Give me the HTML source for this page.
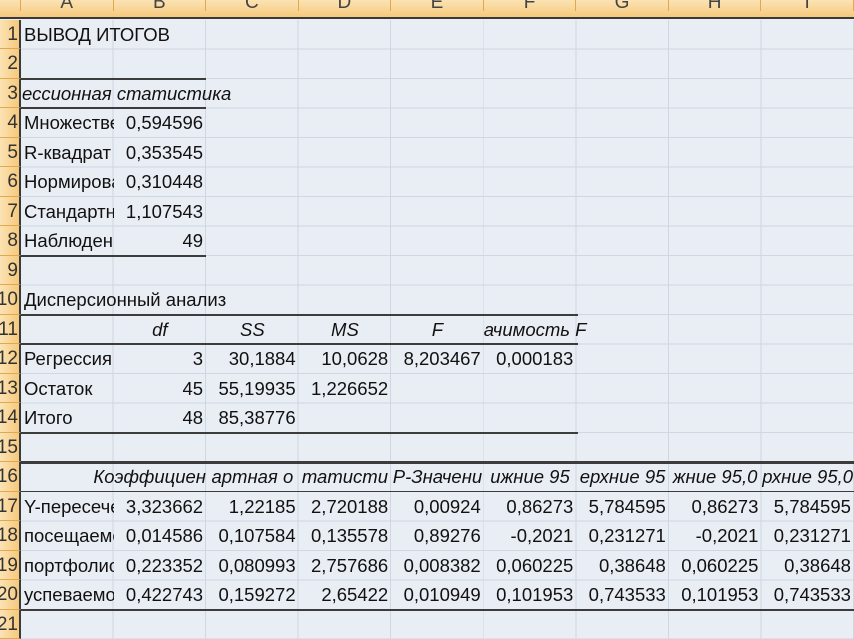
<!DOCTYPE html>
<html><head><meta charset="utf-8"><style>
body{margin:0;width:854px;height:639px;overflow:hidden;background:#e9edf4;font-family:"Liberation Sans",Arial,sans-serif;position:relative}
.grid{position:absolute;left:21px;top:19.5px;right:0;bottom:0;
background-image:repeating-linear-gradient(to right,transparent 0,transparent 91.55px,#d0d7e3 91.55px,#d0d7e3 92.55px),repeating-linear-gradient(to bottom,transparent 0,transparent 28.5px,#d0d7e3 28.5px,#d0d7e3 29.5px);}
.hdr{position:absolute;left:0;top:0;width:854px;height:19px;background:linear-gradient(#fbe3b4,#f6c97c);border-bottom:2px solid #3a3a3a;box-sizing:border-box}
.hl{position:absolute;top:-8px;width:92.55px;text-align:center;font-size:19px;color:#444;border-right:1px solid #e0a850;height:19px;box-sizing:border-box}
.rn{position:absolute;left:0;width:21px;height:29.5px;background:linear-gradient(to right,#fbe3b4,#f6c97c);border-bottom:1px solid #e0a850;border-right:2px solid #3a3a3a;box-sizing:border-box;text-align:right;font-size:19px;line-height:29.5px;color:#333;overflow:hidden;padding-right:1px;direction:rtl}
.c{position:absolute;width:92.55px;height:29.5px;line-height:29px;font-size:18.5px;color:#111;overflow:hidden;white-space:nowrap;box-sizing:border-box;padding:0 3px}
.n{text-align:right}.m{text-align:center;font-style:italic}
.cA{left:21px}.cB{left:113.55px}.cC{left:206.1px}.cD{left:298.65px}.cE{left:391.2px}.cF{left:483.75px}.cG{left:576.3px}.cH{left:668.85px}.cI{left:761.4px}
.r1{top:19.5px}.r2{top:49px}.r3{top:78.5px}.r4{top:108px}.r5{top:137.5px}.r6{top:167px}.r7{top:196.5px}.r8{top:226px}.r9{top:255.5px}.r10{top:285px}.r11{top:314.5px}.r12{top:344px}.r13{top:373.5px}.r14{top:403px}.r15{top:432.5px}.r16{top:462px}.r17{top:491.5px}.r18{top:521px}.r19{top:550.5px}.r20{top:580px}.r21{top:609.5px}
.ln{position:absolute;background:#3c3c3c}
</style></head><body>
<div class="grid"></div>
<div class="hdr">
<div class="hl" style="left:0;width:21px"></div>
<div class="hl" style="left:21px">A</div><div class="hl" style="left:113.55px">B</div><div class="hl" style="left:206.1px">C</div><div class="hl" style="left:298.65px">D</div><div class="hl" style="left:391.2px">E</div><div class="hl" style="left:483.75px">F</div><div class="hl" style="left:576.3px">G</div><div class="hl" style="left:668.85px">H</div><div class="hl" style="left:761.4px">I</div>
</div>
<div class="rn r1">1</div><div class="rn r2">2</div><div class="rn r3">3</div><div class="rn r4">4</div><div class="rn r5">5</div><div class="rn r6">6</div><div class="rn r7">7</div><div class="rn r8">8</div><div class="rn r9">9</div><div class="rn r10">10</div><div class="rn r11">11</div><div class="rn r12">12</div><div class="rn r13">13</div><div class="rn r14">14</div><div class="rn r15">15</div><div class="rn r16">16</div><div class="rn r17">17</div><div class="rn r18">18</div><div class="rn r19">19</div><div class="rn r20">20</div><div class="rn r21">21</div>

<div class="c cA r1" style="overflow:visible">ВЫВОД ИТОГОВ</div>
<div class="c cA r3" style="overflow:visible;font-style:italic;padding:0 0 0 1px">ессионная статистика</div>
<div class="c cA r4">Множественный R</div><div class="c cB r4 n">0,594596</div>
<div class="c cA r5">R-квадрат</div><div class="c cB r5 n">0,353545</div>
<div class="c cA r6">Нормированный</div><div class="c cB r6 n">0,310448</div>
<div class="c cA r7">Стандартная</div><div class="c cB r7 n">1,107543</div>
<div class="c cA r8">Наблюдения</div><div class="c cB r8 n">49</div>
<div class="c cA r10" style="overflow:visible">Дисперсионный анализ</div>
<div class="c cB r11 m">df</div><div class="c cC r11 m">SS</div><div class="c cD r11 m">MS</div><div class="c cE r11 m">F</div><div class="c cF r11" style="overflow:visible;font-style:italic;padding:0">ачимость F</div>
<div class="c cA r12">Регрессия</div><div class="c cB r12 n">3</div><div class="c cC r12 n">30,1884</div><div class="c cD r12 n">10,0628</div><div class="c cE r12 n">8,203467</div><div class="c cF r12 n">0,000183</div>
<div class="c cA r13">Остаток</div><div class="c cB r13 n">45</div><div class="c cC r13 n">55,19935</div><div class="c cD r13 n">1,226652</div>
<div class="c cA r14">Итого</div><div class="c cB r14 n">48</div><div class="c cC r14 n">85,38776</div>
<div class="c r16" style="left:60px;width:146px;text-align:right;font-style:italic;padding:0">Коэффициен</div>
<div class="c cC r16 m" style="padding:0">артная о</div><div class="c cD r16 m" style="padding:0">татисти</div><div class="c cE r16 m" style="padding:0">Р-Значени</div><div class="c cF r16 m" style="padding:0">ижние 95</div><div class="c cG r16 m" style="padding:0">ерхние 95</div><div class="c cH r16 m" style="padding:0">жние 95,0</div><div class="c cI r16 m" style="padding:0">рхние 95,0</div>
<div class="c cA r17">Y-пересечение</div><div class="c cB r17 n">3,323662</div><div class="c cC r17 n">1,22185</div><div class="c cD r17 n">2,720188</div><div class="c cE r17 n">0,00924</div><div class="c cF r17 n">0,86273</div><div class="c cG r17 n">5,784595</div><div class="c cH r17 n">0,86273</div><div class="c cI r17 n">5,784595</div>
<div class="c cA r18">посещаемость</div><div class="c cB r18 n">0,014586</div><div class="c cC r18 n">0,107584</div><div class="c cD r18 n">0,135578</div><div class="c cE r18 n">0,89276</div><div class="c cF r18 n">-0,2021</div><div class="c cG r18 n">0,231271</div><div class="c cH r18 n">-0,2021</div><div class="c cI r18 n">0,231271</div>
<div class="c cA r19">портфолио</div><div class="c cB r19 n">0,223352</div><div class="c cC r19 n">0,080993</div><div class="c cD r19 n">2,757686</div><div class="c cE r19 n">0,008382</div><div class="c cF r19 n">0,060225</div><div class="c cG r19 n">0,38648</div><div class="c cH r19 n">0,060225</div><div class="c cI r19 n">0,38648</div>
<div class="c cA r20">успеваемость</div><div class="c cB r20 n">0,422743</div><div class="c cC r20 n">0,159272</div><div class="c cD r20 n">2,65422</div><div class="c cE r20 n">0,010949</div><div class="c cF r20 n">0,101953</div><div class="c cG r20 n">0,743533</div><div class="c cH r20 n">0,101953</div><div class="c cI r20 n">0,743533</div>

<div class="ln" style="left:21px;width:185px;top:77.5px;height:2.5px"></div>
<div class="ln" style="left:21px;width:185px;top:107px;height:1.5px"></div>
<div class="ln" style="left:21px;width:185px;top:254.5px;height:2.5px"></div>
<div class="ln" style="left:21px;width:557px;top:313.5px;height:2.5px"></div>
<div class="ln" style="left:21px;width:557px;top:343px;height:1.5px"></div>
<div class="ln" style="left:21px;width:557px;top:431.5px;height:2.5px"></div>
<div class="ln" style="left:21px;width:833px;top:461px;height:2.5px"></div>
<div class="ln" style="left:21px;width:833px;top:490.5px;height:1.5px"></div>
<div class="ln" style="left:21px;width:833px;top:608.5px;height:2.5px"></div>
</body></html>
